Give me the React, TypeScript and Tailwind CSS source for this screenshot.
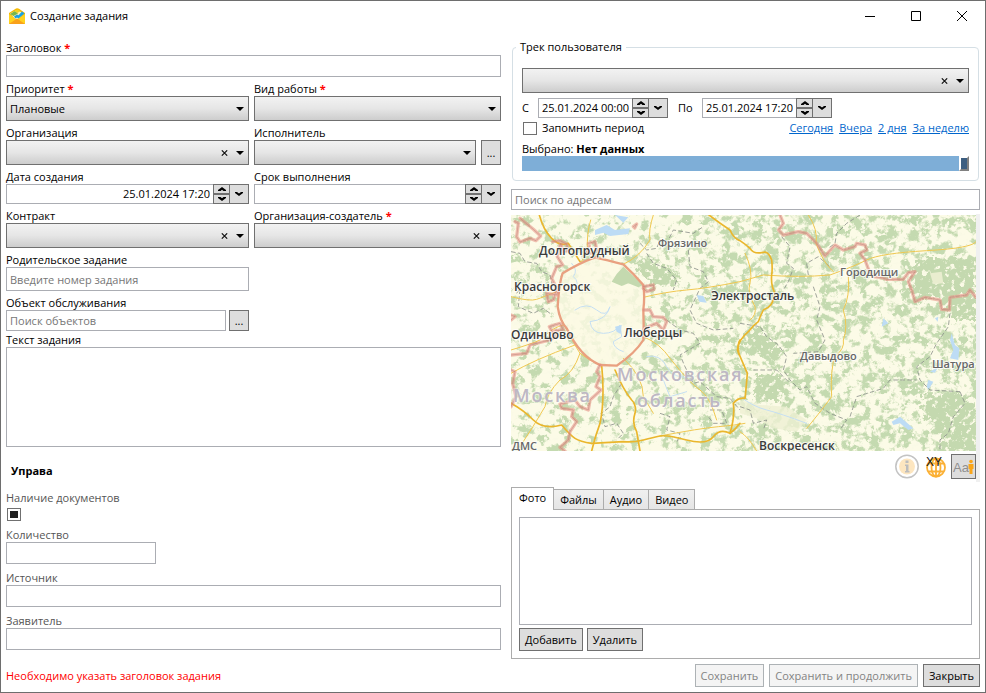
import { useEffect, useId, useRef, useState, type ReactNode } from "react";

const inputClass =
  "block w-full min-w-0 border border-[#abadb3] bg-white px-[3px] outline-none placeholder:text-[#767676] focus:border-[#569de5]";

function Label({ htmlFor, required, children }: { htmlFor: string; required?: boolean; children: ReactNode }) {
  return (
    <label htmlFor={htmlFor} className="block h-4 pt-px leading-4 whitespace-nowrap">
      {children}
      {required && <span className="font-bold text-[#ff0000]"> *</span>}
    </label>
  );
}

function Combo({
  id,
  value = "",
  clearable,
  label,
}: {
  id?: string;
  value?: string;
  clearable?: boolean;
  label?: string;
}) {
  return (
    <div className="relative min-w-0 flex-1">
      <select
        id={id}
        aria-label={label}
        defaultValue={value}
        className="block h-[25px] w-full appearance-none border border-[#707070] bg-linear-to-b from-[#f2f2f2] via-[#e6e6e6] to-[#cdcdcd] px-[3px] outline-none"
      >
        <option value={value}>{value}</option>
      </select>
      {clearable && (
        <button type="button" aria-label="Очистить" className="absolute top-2 right-5 flex size-2.5 items-center justify-center">
          <svg viewBox="0 0 7 6" className="h-1.5 w-[7px]" fill="none" stroke="#111" strokeWidth="1.1">
            <path d="M.8 .3 6.2 5.7M6.2 .3 .8 5.7" />
          </svg>
        </button>
      )}
      <svg viewBox="0 0 8 4" className="pointer-events-none absolute top-[11px] right-[5px] h-1 w-2">
        <path d="M0 0h8L4 4z" fill="#000" />
      </svg>
    </div>
  );
}

function DateField({ id, value = "", right, label }: { id?: string; value?: string; right?: boolean; label?: string }) {
  return (
    <div className="flex h-5 min-w-0">
      <input
        id={id}
        aria-label={label}
        defaultValue={value}
        className={
          "min-w-0 flex-1 border border-r-0 border-[#abadb3] bg-white px-[3px] outline-none " + (right ? "text-right" : "")
        }
      />
      <div className="flex w-[17px] shrink-0 flex-col">
        <button type="button" aria-label="Больше" className="flex flex-1 items-center justify-center border border-[#707070] bg-[#ddd]">
          <svg viewBox="0 0 8 4" className="h-1 w-2">
            <path d="M4 0 8 3v1H5.500L4 2.800 2.500 4H0V3z" />
          </svg>
        </button>
        <button type="button" aria-label="Меньше" className="flex flex-1 items-center justify-center border border-[#707070] bg-[#ddd]">
          <svg viewBox="0 0 8 4" className="h-1 w-2">
            <path d="M4 4 8 1V0H5.500L4 1.200 2.500 0H0v1z" />
          </svg>
        </button>
      </div>
      <button type="button" aria-label="Календарь" className="flex w-[19px] shrink-0 items-center justify-center border border-l-0 border-[#707070] bg-[#ddd]">
        <svg viewBox="0 0 8 4" className="h-1 w-2">
          <path d="M4 4 8 1V0H6L4 1.400 2 0H0v1z" />
        </svg>
      </button>
    </div>
  );
}

function MoreButton({ className = "" }: { className?: string }) {
  return (
    <button type="button" aria-label="Выбрать" className={"w-5 shrink-0 border border-[#707070] bg-[#ddd] leading-4 " + className}>
      ...
    </button>
  );
}

function Button({ disabled, children }: { disabled?: boolean; children: ReactNode }) {
  return (
    <button
      type="button"
      disabled={disabled}
      className="h-[23px] border border-[#707070] bg-[#ddd] px-[5px] whitespace-nowrap disabled:border-[#adb2b5] disabled:bg-[#f4f4f4] disabled:text-[#838383]"
    >
      {children}
    </button>
  );
}

function MailIcon() {
  return (
    <svg viewBox="0 0 16 16" className="size-4">
      <path d="M0 5 7 .500Q8.500-.200 10 .700L16 5v11H0z" fill="#f5b700" />
      <path d="M1 5.500 8 2l7 3.500L9 11H6z" fill="#fdf0b8" />
      <path d="M1 6 6 3 9 5.500 4.500 8z" fill="#7ab648" />
      <path d="M5.500 3 8.500 1.500l3 1.500L8.500 5z" fill="#f3d21b" />
      <path d="M5 8.500 8 6.500l1.500 .800L13 3.500 15.500 5.500 9.500 10.500 8 9.500 6.500 10.500z" fill="#1ba1e2" />
      <path d="M0 6 8 12l8-6V16H0z" fill="#ffd21e" />
      <path d="M0 16 8 10.500 16 16z" fill="#f9a11b" />
    </svg>
  );
}

const majorRoads = [
  "M33 580Q70 600 100 630T185 645Q210 675 225 685T275 700L370 695Q400 698 430 690T480 678 560 690 640 680 690 670Q705 660 720 640",
  "M118 15Q130 60 155 85T205 100L240 155",
  "M345 480Q370 540 395 570 410 585 405 610 395 640 410 665L420 723",
  "M305 465Q315 570 300 640 285 680 275 723",
  "M627 15Q660 40 690 60 700 85 720 92 735 102 750 115 760 132 785 128 805 120 815 150 818 175 815 195 812 225 825 250 820 290 790 300 780 320 775 335 760 345 745 365 715 390 712 420 725 450 742 490 738 540 735 565 715 562 700 580 705 620 690 670",
  "M720 390Q712 400 716 432",
];

const minorRoads = [
  "M460 15Q445 60 450 90 420 140 370 163",
  "M430 262Q500 245 560 240T720 215L790 195Q900 203 990 195 1060 170 1100 150T1280 122 1428 95",
  "M430 380Q480 400 510 445 570 520 600 540T650 630",
  "M33 260Q90 275 110 268T170 245",
  "M33 420Q100 400 120 390 160 350 190 345",
  "M33 490Q100 450 225 405",
  "M178 315Q220 400 240 430 265 450 300 465",
  "M240 430Q220 490 180 510 140 550 135 590 100 650 60 710",
  "M370 445Q430 500 430 560L460 610",
  "M272 30Q260 70 262 120L245 155",
  "M925 15Q955 60 948 100 970 160 1000 185",
  "M1045 200Q1050 260 1030 300 1045 350 1030 390 1035 415 1005 440 990 480 995 560 950 620 920 655 880 680L860 700",
  "M735 130Q760 180 750 220 740 245 765 290 770 315 750 330",
  "M720 665Q745 680 770 723",
  "M480 678Q600 655 655 650T735 640",
];

const borders = [
  "M60 25 100 58 122 78 108 92 90 85 60 96 50 80 55 40 45 35",
  "M158 95 180 92 200 102 204 122 190 125 182 100 172 140 188 165 170 170 155 205 170 235 160 270 145 275 140 250 170 255 178 230",
  "M265 100 285 95 290 120 280 130 262 128 268 108",
  "M400 50 410 42 404 54",
  "M430 230 460 225 462 238 440 245 430 235",
  "M432 300 450 300 460 320 490 322 500 335 490 360 470 340 440 352 445 362",
  "M33 435 80 430 90 405 150 390 165 380 148 350 180 340 190 360 165 362",
  "M33 315 45 320 33 330",
  "M300 465 290 485 300 500 288 530 303 540 270 570 265 600 240 590 225 570 180 582 185 595 220 600 215 620 230 635 210 665 205 690 180 712 195 723",
  "M33 480 45 485 38 520 48 560 33 590",
  "M840 15 850 40 836 60 850 75 895 65 920 70 950 100 975 138 1005 105 1030 120 1065 110 1070 100 1095 105 1100 120 1080 130 1095 150 1110 190 1120 200 1145 203 1160 208 1210 208 1225 188 1245 185 1225 215 1235 240 1245 275 1275 262 1320 270 1325 298 1348 300 1350 262 1400 255 1410 240 1428 262",
];

const moscow =
  "M188 190Q235 160 285 142 320 150 370 163 400 190 430 225 435 260 430 300 432 345 430 390 405 430 350 467L300 465Q240 440 200 355 180 335 173 290 178 215 188 190z";

const districts = [
  "M33 125 60 130 75 155 110 160 125 185 150 195 158 230",
  "M50 250 60 235 55 290 100 310 130 295 150 310",
  "M420 100 440 120 470 115 480 90 500 100 520 60 580 70 610 50",
  "M565 120 570 170 610 185 625 215 600 235 570 300 590 340 640 360 700 355",
  "M440 130 460 160 500 175 530 210 520 240",
  "M500 330 540 360 580 370 600 400 540 435 555 470 580 520 600 515 650 560 690 565 720 600",
  "M365 520 340 560 330 590 305 610 315 650 350 640 370 670 350 690",
  "M480 610 510 620 500 660 540 670 530 700",
  "M630 600 665 600 680 640 640 640 625 620",
  "M845 80 870 110 860 160 880 175 865 215 850 240",
  "M1080 15 1040 40 1010 70 1005 100 985 115",
  "M925 195 920 160 955 140 990 170",
  "M940 230 960 290 950 330 975 390 955 425 880 430",
  "M720 340 780 350 800 380 835 405 860 440 850 480 870 510 900 540 920 530 945 580 990 610 1040 630 1020 660",
  "M760 480 830 480 870 520",
  "M1350 310 1345 350 1310 400 1290 440 1250 470 1260 510 1290 540 1380 545",
  "M1050 620 1070 560 1150 535 1170 510 1250 510",
  "M1380 545 1395 580 1360 620 1345 670 1320 690 1320 723",
  "M720 590 750 600 760 640 800 630 790 660",
];

const rivers = [
  "M215 160Q235 180 220 200 240 215 225 240",
  "M225 300Q260 275 290 300T330 290Q320 330 270 335 275 370 310 370T360 345L365 380 340 395Q340 415 370 425",
  "M440 440Q480 430 500 470T580 500",
  "M490 510 510 560 560 545",
  "M720 560Q760 590 800 600T920 640",
];

const lakes = [
  "M285 60 320 45 345 60 390 55 385 72 330 78 310 68 285 75z",
  "M345 15 385 22 370 38z",
  "M345 350 365 345 362 372 350 365z",
  "M590 255 610 258 620 278 598 275z",
  "M1355 370 1365 405 1378 415 1375 450 1350 445 1360 420 1350 390z",
  "M1165 340 1150 325 1145 350z",
  "M1175 635 1200 620 1240 655 1225 660 1200 640 1180 645z",
  "M1280 530 1285 510 1300 515 1285 540z",
  "M1305 325 1315 320 1313 335z",
  "M1290 485 1315 470 1305 488z",
];

const woods = [
  "M430 150 490 170 530 190 540 220 470 225 435 210 400 170z",
  "M1245 150 1350 140 1428 145 1428 260 1350 260 1345 300 1325 295 1320 265 1240 270 1228 215z",
  "M770 490 850 500 850 560 800 580 765 560z",
  "M1270 550 1380 550 1428 580 1428 723 1330 723 1310 640 1270 620z",
  "M720 370 780 350 850 420 830 450 780 430 720 395z",
  "M1350 260 1428 265 1428 330 1360 330z",
];

const places = [
  { name: "Долгопрудный", x: 28, y: 40, big: true },
  { name: "Фрязино", x: 147, y: 32 },
  { name: "Красногорск", x: 3, y: 76, big: true },
  { name: "Электросталь", x: 200, y: 85, big: true },
  { name: "Городищи", x: 329, y: 61 },
  { name: "Одинцово", x: 0, y: 124, big: true },
  { name: "Люберцы", x: 113, y: 122, big: true },
  { name: "Давыдово", x: 289, y: 145 },
  { name: "Шатура", x: 421, y: 153 },
  { name: "ДМС", x: 1, y: 235 },
  { name: "Воскресенск", x: 248, y: 235, big: true },
];

const regions = [
  { name: "Москва", x: 2, y: 187 },
  { name: "Московская", x: 106, y: 166 },
  { name: "область", x: 126, y: 192 },
];

function Map() {
  return (
    <svg
      viewBox="0 0 465 236"
      preserveAspectRatio="xMinYMin slice"
      role="img"
      aria-label="Карта"
      className="block h-[236px] min-w-0 flex-1 bg-[#fcfbe7]"
    >
      <defs>
        <filter id="forest" x="0" y="0" width="100%" height="100%" colorInterpolationFilters="sRGB">
          <feTurbulence type="fractalNoise" baseFrequency="0.1" numOctaves="5" seed="8" />
          <feColorMatrix values="0 0 0 0 .77  0 0 0 0 .855  0 0 0 0 .69  8 0 0 0 -4" />
        </filter>
        <filter id="eastForest" x="0" y="0" width="100%" height="100%" colorInterpolationFilters="sRGB">
          <feTurbulence type="fractalNoise" baseFrequency="0.07" numOctaves="5" seed="21" />
          <feColorMatrix values="0 0 0 0 .77  0 0 0 0 .855  0 0 0 0 .69  9 0 0 0 -4.9" />
        </filter>
        <filter id="glades" x="0" y="0" width="100%" height="100%" colorInterpolationFilters="sRGB">
          <feTurbulence type="fractalNoise" baseFrequency="0.18" numOctaves="4" seed="5" />
          <feColorMatrix values="0 0 0 0 .98  0 0 0 0 .98  0 0 0 0 .9  8 0 0 0 -4.6" />
        </filter>
        <filter id="rough" x="-10%" y="-10%" width="120%" height="120%">
          <feTurbulence type="fractalNoise" baseFrequency="0.06" numOctaves="4" seed="3" />
          <feDisplacementMap in="SourceGraphic" scale="50" xChannelSelector="R" yChannelSelector="G" />
        </filter>
      </defs>
      <rect width="465" height="236" fill="#fcfbe7" />
      <rect width="465" height="236" filter="url(#forest)" />
      <rect x="190" width="275" height="236" filter="url(#eastForest)" />
      <g transform="scale(.333333) translate(-33 -15)" fill="none" strokeLinecap="round" strokeLinejoin="round">
        <g fill="#c4d9af" filter="url(#rough)">
          {woods.map((d) => (
            <path key={d} d={d} />
          ))}
        </g>
      </g>
      <rect width="465" height="236" filter="url(#glades)" />
      <g transform="scale(.333333) translate(-33 -15)" fill="none" strokeLinecap="round" strokeLinejoin="round">
        <path d={moscow} fill="#fbf9e3" fillOpacity=".82" />
        <path d="M335 215 350 192 370 170 430 225 415 232 385 220 365 228z" fill="#c4d9af" />
        <path d="M1290 190 1325 185 1330 220 1300 222z" fill="#e9edcf" />
        <path d="M720 570 780 585 860 590 920 630 890 665 820 655 770 625 720 610z" fill="#edf0d3" fillOpacity=".8" />
        <g stroke="#c5dff3" strokeWidth="3">
          {rivers.map((d) => (
            <path key={d} d={d} />
          ))}
        </g>
        <g fill="#bddcf5">
          {lakes.map((d) => (
            <path key={d} d={d} />
          ))}
        </g>
        <g stroke="#8d918b" strokeWidth="2.500" strokeDasharray="14 7" strokeLinecap="butt">
          {districts.map((d) => (
            <path key={d} d={d} />
          ))}
        </g>
        <g stroke="#f0c850" strokeWidth="3">
          {minorRoads.map((d) => (
            <path key={d} d={d} />
          ))}
        </g>
        <g stroke="#eab62c" strokeWidth="5">
          {majorRoads.map((d) => (
            <path key={d} d={d} />
          ))}
        </g>
        <path d={moscow} stroke="#e9a080" strokeWidth="7" />
        <g stroke="#e58c80" strokeOpacity=".55" strokeWidth="10">
          {borders.map((d) => (
            <path key={d} d={d} />
          ))}
        </g>
        <g stroke="#c0847c" strokeOpacity=".8" strokeWidth="2">
          {borders.map((d) => (
            <path key={d} d={d} />
          ))}
        </g>
      </g>
      <g className="text-[18px] font-semibold tracking-widest" fill="#bdb7c4" stroke="#fff" strokeOpacity=".4" strokeWidth="2" paintOrder="stroke">
        {regions.map((r) => (
          <text key={r.name} x={r.x} y={r.y}>
            {r.name}
          </text>
        ))}
      </g>
      <g stroke="#fff" strokeOpacity=".75" strokeWidth="2" paintOrder="stroke">
        {places.map((p) => (
          <text
            key={p.name}
            x={p.x}
            y={p.y}
            fill={p.big ? "#3b3b3b" : "#666"}
            className={p.big ? "text-[12px] font-semibold" : "text-[11px] font-semibold"}
          >
            {p.name}
          </text>
        ))}
      </g>
    </svg>
  );
}

function MapTools() {
  return (
    <div className="flex h-[25px] flex-1 justify-end gap-[3px]">
      <button type="button" aria-label="Информация" className="size-[25px]">
        <svg viewBox="0 0 25 25" className="size-[25px]">
          <circle cx="12" cy="12.500" r="11.200" fill="#fff" stroke="#c3c3c3" strokeWidth="1.500" />
          <circle cx="12" cy="12.500" r="8" fill="#fde6c0" />
          <path d="M10.500 6.500h3v2.500h-3zM10 10.500h3.500v6.500h1v1.500h-4.500V17h1v-5h-1z" fill="#bdbdbd" />
        </svg>
      </button>
      <button type="button" aria-label="Координаты XY" className="size-[25px]">
        <svg viewBox="0 0 25 25" className="size-[25px]">
          <g fill="none" stroke="#fbb034" strokeWidth="1.800">
            <circle cx="13" cy="13.500" r="9" />
            <ellipse cx="13" cy="13.500" rx="4.500" ry="9" />
            <path d="M13 4.500v18M5 9.500h16M5 17.500h16" />
          </g>
          <text x="3" y="12" fill="#111" className="font-['Liberation_Sans',sans-serif] text-[12px]">
            XY
          </text>
        </svg>
      </button>
      <button type="button" aria-label="Подписи" className="size-[25px] border border-[#707070] bg-[#ddd]">
        <svg viewBox="0 0 23 23" className="size-[23px]">
          <text x="1" y="17" fill="#8f8f8f" className="font-['Liberation_Sans',sans-serif] text-[13px]">
            Aa
          </text>
          <circle cx="19" cy="6.500" r="1.800" fill="#faa61a" />
          <path d="M16.500 9h5v5h-1v5h-3v-5h-1z" fill="#faa61a" />
        </svg>
      </button>
    </div>
  );
}

const tabs = ["Фото", "Файлы", "Аудио", "Видео"];
const periods = ["Сегодня", "Вчера", "2 дня", "За неделю"];

export default function App() {
  const id = useId();
  const docsRef = useRef<HTMLInputElement>(null);
  const [tab, setTab] = useState("Фото");

  useEffect(() => {
    if (docsRef.current) docsRef.current.indeterminate = true;
  }, []);

  return (
    <div className="flex min-h-screen flex-col border border-[#6e6e6e] bg-white font-['Open_Sans','Noto_Sans',sans-serif] text-[11px] leading-4 text-black">
      <header className="flex h-[29px] shrink-0 items-center pl-2">
        <MailIcon />
        <h1 className="flex-1 pl-[5px]">Создание задания</h1>
        <button type="button" aria-label="Свернуть" className="flex h-full w-[46px] items-center justify-center">
          <svg viewBox="0 0 10 10" className="size-2.5" shapeRendering="crispEdges">
            <path d="M0 5h10v1H0z" />
          </svg>
        </button>
        <button type="button" aria-label="Развернуть" className="flex h-full w-[46px] items-center justify-center">
          <svg viewBox="0 0 10 10" className="size-2.5" fill="none" stroke="#000">
            <path d="M.5 .5h9v9h-9z" />
          </svg>
        </button>
        <button type="button" aria-label="Закрыть окно" className="flex h-full w-[46px] items-center justify-center">
          <svg viewBox="0 0 10 10" className="size-2.5" fill="none" stroke="#000">
            <path d="M0 0l10 10M10 0 0 10" />
          </svg>
        </button>
      </header>

      <main className="grid grid-cols-[495fr_469fr] gap-x-2.5 px-[5px] pt-[9px]">
        <form className="min-w-0">
          <div className="grid grid-cols-[243fr_247fr] gap-x-[5px] gap-y-[3px]">
            <div className="col-span-2">
              <Label htmlFor={id + "title"} required>Заголовок</Label>
              <input id={id + "title"} className={inputClass + " h-[22px]"} />
            </div>
            <div className="min-w-0">
              <Label htmlFor={id + "priority"} required>Приоритет</Label>
              <Combo id={id + "priority"} value="Плановые" />
            </div>
            <div className="min-w-0">
              <Label htmlFor={id + "kind"} required>Вид работы</Label>
              <Combo id={id + "kind"} />
            </div>
            <div className="min-w-0">
              <Label htmlFor={id + "org"}>Организация</Label>
              <Combo id={id + "org"} clearable />
            </div>
            <div className="min-w-0">
              <Label htmlFor={id + "worker"}>Исполнитель</Label>
              <div className="flex gap-[5px]">
                <Combo id={id + "worker"} />
                <MoreButton className="h-[25px]" />
              </div>
            </div>
            <div className="min-w-0">
              <Label htmlFor={id + "created"}>Дата создания</Label>
              <DateField id={id + "created"} value="25.01.2024 17:20" right />
            </div>
            <div className="min-w-0">
              <Label htmlFor={id + "due"}>Срок выполнения</Label>
              <DateField id={id + "due"} />
            </div>
            <div className="min-w-0">
              <Label htmlFor={id + "contract"}>Контракт</Label>
              <Combo id={id + "contract"} clearable />
            </div>
            <div className="min-w-0">
              <Label htmlFor={id + "owner"} required>Организация-создатель</Label>
              <Combo id={id + "owner"} clearable />
            </div>
            <div className="col-start-1 min-w-0">
              <Label htmlFor={id + "parent"}>Родительское задание</Label>
              <input id={id + "parent"} placeholder="Введите номер задания" className={inputClass + " h-6"} />
            </div>
            <div className="col-start-1 min-w-0">
              <Label htmlFor={id + "object"}>Объект обслуживания</Label>
              <div className="flex gap-[3px]">
                <input id={id + "object"} placeholder="Поиск объектов" className={inputClass + " h-[21px]"} />
                <MoreButton className="h-[21px]" />
              </div>
            </div>
          </div>
          <Label htmlFor={id + "text"}>Текст задания</Label>
          <textarea id={id + "text"} className={inputClass + " h-[100px] resize-none"} />

          <h2 className="mt-4 pl-[5px] font-bold">Управа</h2>
          <div className="mt-2.5 flex flex-col gap-[5px] text-[#555]">
            <div>
              <Label htmlFor={id + "docs"}>Наличие документов</Label>
              <input
                ref={docsRef}
                id={id + "docs"}
                type="checkbox"
                className="mt-[3px] ml-px block h-[13px] w-3.5 appearance-none border border-[#707070] bg-[#212121] shadow-[inset_0_0_0_2px_white]"
              />
            </div>
            <div>
              <Label htmlFor={id + "count"}>Количество</Label>
              <div className="w-[150px]">
                <input id={id + "count"} className={inputClass + " h-[22px]"} />
              </div>
            </div>
            <div>
              <Label htmlFor={id + "source"}>Источник</Label>
              <input id={id + "source"} className={inputClass + " h-[22px]"} />
            </div>
            <div>
              <Label htmlFor={id + "applicant"}>Заявитель</Label>
              <input id={id + "applicant"} className={inputClass + " h-[22px]"} />
            </div>
          </div>
        </form>

        <div className="flex min-w-0 flex-col">
          <fieldset className="mx-px min-w-0 rounded border border-[#d5dfe5] px-[9px] pb-[9px]">
            <legend className="-ml-1.5 px-1 leading-4">Трек пользователя</legend>
            <div className="flex pt-[13px]">
              <Combo label="Пользователь" clearable />
            </div>
            <div className="mt-[5px] flex items-center">
              <label htmlFor={id + "from"} className="w-4">С</label>
              <div className="w-[130px]">
                <DateField id={id + "from"} value="25.01.2024 00:00" />
              </div>
              <label htmlFor={id + "to"} className="w-[34px] pl-2.5">По</label>
              <div className="w-[130px]">
                <DateField id={id + "to"} value="25.01.2024 17:20" />
              </div>
            </div>
            <div className="mt-0.5 flex h-4 items-center justify-between">
              <label className="flex items-center gap-[5px] pl-px">
                <input type="checkbox" className="h-[13px] w-3.5 appearance-none border border-[#707070] bg-white checked:bg-[#212121]" />
                Запомнить период
              </label>
              <div className="flex gap-1.5 text-[#0066cc] underline">
                {periods.map((p) => (
                  <a key={p} href="#">{p}</a>
                ))}
              </div>
            </div>
            <label htmlFor={id + "track"} className="block h-5 pt-[5px]">
              Выбрано: <span className="font-bold">Нет данных</span>
            </label>
            <input
              id={id + "track"}
              type="range"
              defaultValue={100}
              className="block h-[15px] w-full appearance-none bg-[#7eaed7] [&::-webkit-slider-thumb]:h-[15px] [&::-webkit-slider-thumb]:w-2.5 [&::-webkit-slider-thumb]:appearance-none [&::-webkit-slider-thumb]:border-2 [&::-webkit-slider-thumb]:border-t-white [&::-webkit-slider-thumb]:border-r-[#808080] [&::-webkit-slider-thumb]:border-b-[#808080] [&::-webkit-slider-thumb]:border-l-white [&::-webkit-slider-thumb]:bg-[#3d5e80]"
            />
          </fieldset>

          <input aria-label="Поиск по адресам" placeholder="Поиск по адресам" className={inputClass + " mt-2 h-[21px]"} />

          <div className="mt-1 border-r-4 border-[#f0f0f0] pt-px pb-[3px]">
            <div className="flex">
              <Map />
            </div>
            <div className="mt-[3px] flex">
              <MapTools />
            </div>
          </div>

          <div role="tablist" className="mt-[5px] flex items-end">
            {tabs.map((t) => (
              <button
                key={t}
                type="button"
                role="tab"
                aria-selected={tab === t}
                onClick={() => setTab(t)}
                className={
                  "border border-b-0 border-[#acacac] " +
                  (tab === t
                    ? "z-10 -mb-px h-[23px] bg-white px-[7px] pb-0.5"
                    : "-ml-px h-5 bg-linear-to-b from-[#f0f0f0] to-[#e5e5e5] px-1.5")
                }
              >
                {t}
              </button>
            ))}
          </div>
          <div role="tabpanel" className="border border-[#acacac] p-[7px]">
            <div className="h-[108px] border border-[#abadb3]" />
            <div className="mt-[3px] flex gap-1">
              <Button>Добавить</Button>
              <Button>Удалить</Button>
            </div>
          </div>
        </div>
      </main>

      <footer className="mt-auto flex items-center justify-between px-[5px] pt-[5px] pb-[5px]">
        <p role="alert" className="text-[#ff0000]">Необходимо указать заголовок задания</p>
        <div className="flex gap-[5px]">
          <Button disabled>Сохранить</Button>
          <Button disabled>Сохранить и продолжить</Button>
          <Button>Закрыть</Button>
        </div>
      </footer>
    </div>
  );
}
